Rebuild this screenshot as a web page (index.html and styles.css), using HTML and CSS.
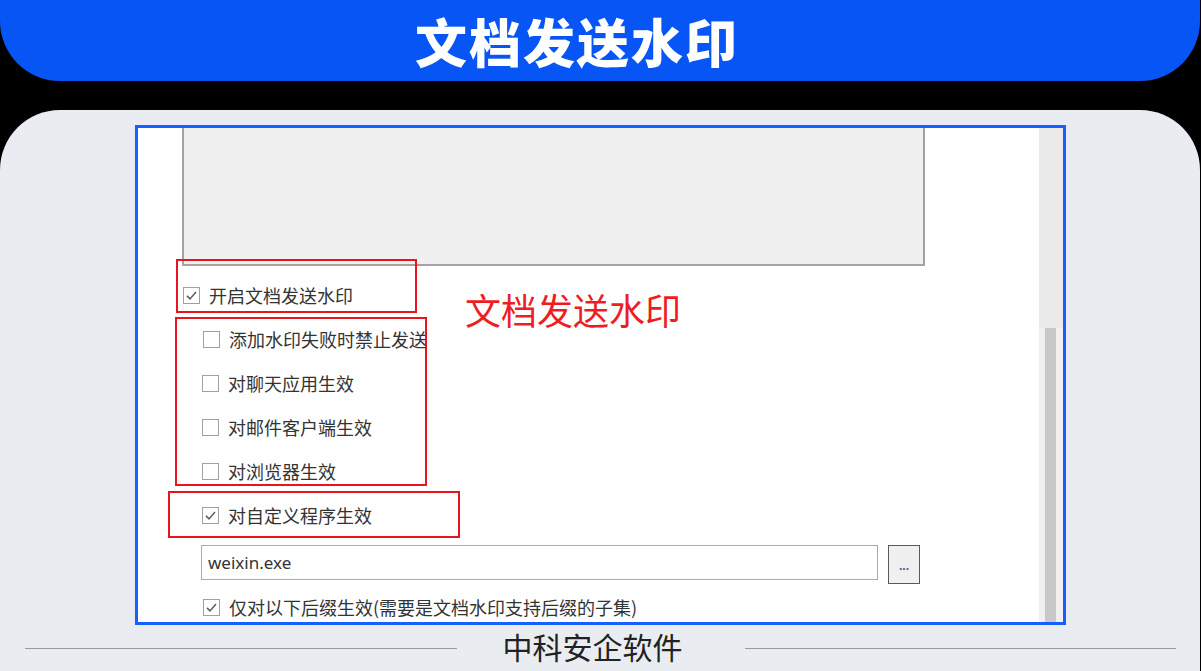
FILE: index.html
```html
<!DOCTYPE html>
<html lang="zh-CN">
<head>
<meta charset="utf-8">
<title>文档发送水印</title>
<link rel="stylesheet" href="styles.css">
</head>
<body>
<div class="page">
  <header class="banner"><h1 class="banner-title">文档发送水印</h1></header>
  <section class="panel">
    <div class="shot">
      <div class="shot-main">
        <div class="preview"></div>
        <div class="row r1"><span class="cb checked"><svg viewBox="0 0 16 16"><path d="M3.2 8.4 L6.4 11.6 L12.8 4.2" fill="none" stroke="#5c5c5c" stroke-width="1.6"/></svg></span><span class="lbl">开启文档发送水印</span></div>
        <div class="row r2"><span class="cb"></span><span class="lbl">添加水印失败时禁止发送</span></div>
        <div class="row r3"><span class="cb"></span><span class="lbl">对聊天应用生效</span></div>
        <div class="row r3"><span class="cb"></span><span class="lbl">对邮件客户端生效</span></div>
        <div class="row r3"><span class="cb"></span><span class="lbl">对浏览器生效</span></div>
        <div class="row r3"><span class="cb checked"><svg viewBox="0 0 16 16"><path d="M3.2 8.4 L6.4 11.6 L12.8 4.2" fill="none" stroke="#5c5c5c" stroke-width="1.6"/></svg></span><span class="lbl">对自定义程序生效</span></div>
        <div class="input-row">
          <div class="input">weixin.exe</div>
          <div class="btn">...</div>
        </div>
        <div class="row r7"><span class="cb checked"><svg viewBox="0 0 16 16"><path d="M3.2 8.4 L6.4 11.6 L12.8 4.2" fill="none" stroke="#5c5c5c" stroke-width="1.6"/></svg></span><span class="lbl">仅对以下后缀生效(需要是文档水印支持后缀的子集)</span></div>

        <div class="mark m1"></div>
        <div class="mark m2"></div>
        <div class="mark m3"></div>
        <div class="note">文档发送水印</div>
      </div>
      <div class="scroll">
        <div class="scroll-top"></div>
        <div class="scroll-track"><div class="scroll-thumb"></div></div>
      </div>
    </div>
    <footer class="foot">
      <span class="foot-line"></span>
      <span class="foot-text">中科安企软件</span>
      <span class="foot-line right"></span>
    </footer>
  </section>
</div>
</body>
</html>
```

FILE: styles.css
```css
html, body {
  margin: 0;
  padding: 0;
  background: #000;
}
body {
  width: 1201px;
  height: 671px;
  overflow: hidden;
  font-family: "Noto Sans CJK SC", "Noto Sans", sans-serif;
}
.page {
  width: 1200px;
  height: 671px;
  display: flex;
  flex-direction: column;
}
.banner {
  height: 81px;
  background: #0655F4;
  border-radius: 0 0 60px 60px;
  display: flex;
  align-items: center;
  justify-content: center;
  padding-right: 46px;
}
.banner-title {
  margin: 0;
  color: #fff;
  font-size: 52px;
  font-weight: 900;
  letter-spacing: 2px;
  line-height: 1;
}
.panel {
  margin-top: 29px;
  flex: 1;
  background: #E9EDF2;
  border-radius: 60px 60px 0 0;
  display: flex;
  flex-direction: column;
}
.shot {
  margin: 15px 0 0 135px;
  width: 925px;
  height: 494px;
  border: 3px solid #1560FF;
  background: #fff;
  display: flex;
  overflow: hidden;
}
.shot-main {
  position: relative;
  flex: 1;
}
.preview {
  margin-left: 44px;
  width: 739px;
  height: 136px;
  background: #F0F0F0;
  border: 2px solid #A3A3A3;
  border-top: none;
}
.row {
  height: 44px;
  display: flex;
  align-items: center;
  color: #333;
  font-size: 18px;
}
.r1 { margin-top: 7px; padding-left: 45px; }
.r2 { padding-left: 65px; }
.r3 { padding-left: 64px; }
.r7 { margin-top: 11px; height: 24px; padding-left: 65px; }
.cb {
  width: 15px;
  height: 15px;
  border: 1px solid #A0A0A0;
  background: #fff;
  margin-right: 9px;
  display: flex;
  flex: none;
}
.cb svg { width: 15px; height: 15px; }
.lbl { line-height: 1; white-space: nowrap; }
.input-row {
  margin-top: 8px;
  display: flex;
  align-items: flex-start;
  padding-left: 63px;
}
.input {
  width: 669px;
  height: 33px;
  border: 1px solid #ABABAB;
  padding-left: 6px;
  display: flex;
  align-items: center;
  font-family: "Noto Sans", sans-serif;
  font-size: 17px;
  color: #333;
}
.btn {
  margin-left: 10px;
  width: 30px;
  height: 35px;
  border: 1px solid #5A5A5A;
  background: #F0F0F0;
  display: flex;
  align-items: center;
  justify-content: center;
  font-family: "Noto Sans", sans-serif;
  font-size: 12px;
  font-weight: 700;
  color: #4a5a8a;
  padding-top: 2px;
  box-sizing: content-box;
}
.mark {
  position: absolute;
  border: 2px solid #E8141E;
}
.m1 { left: 38px; top: 131px; width: 237px; height: 50px; }
.m2 { left: 37px; top: 189px; width: 248px; height: 165px; }
.m3 { left: 30px; top: 363px; width: 288px; height: 43px; }
.note {
  position: absolute;
  left: 327px;
  top: 161px;
  font-size: 36px;
  line-height: 40px;
  color: #EE1D24;
  white-space: nowrap;
}
.scroll {
  width: 24px;
  flex: none;
  display: flex;
  flex-direction: column;
}
.scroll-top {
  height: 200px;
  background: #EAEAEA;
}
.scroll-track {
  flex: 1;
  background: #F0F0F0;
  display: flex;
  justify-content: center;
  padding-right: 2px;
}
.scroll-thumb {
  width: 11px;
  background: #C8C8C8;
}
.foot {
  flex: 1;
  display: flex;
  align-items: center;
  padding: 0 24px 4px 25px;
}
.foot-line {
  flex: 1;
  height: 1px;
  background: #9A9A9A;
  margin-top: 4px;
}
.foot-text {
  margin: 0 62px 0 46px;
  font-size: 30px;
  color: #222;
  line-height: 1;
}
```
